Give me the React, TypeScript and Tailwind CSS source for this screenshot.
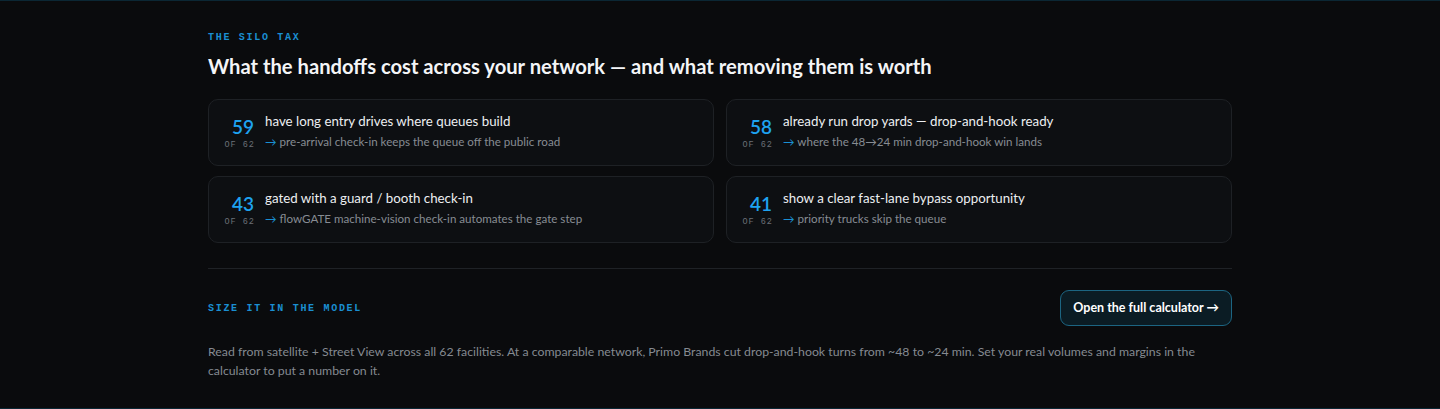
import React from 'react'

type Stat = {
  count: number
  title: string
  note: string
}

const stats: Stat[] = [
  { count: 59, title: 'have long entry drives where queues build', note: 'pre-arrival check-in keeps the queue off the public road' },
  { count: 58, title: 'already run drop yards — drop-and-hook ready', note: 'where the 48→24 min drop-and-hook win lands' },
  { count: 43, title: 'gated with a guard / booth check-in', note: 'flowGATE machine-vision check-in automates the gate step' },
  { count: 41, title: 'show a clear fast-lane bypass opportunity', note: 'priority trucks skip the queue' },
]

const TOTAL = 62

function Eyebrow({ children }: { children: React.ReactNode }) {
  return (
    <p className="font-['Liberation_Mono',monospace] text-[10px] font-bold leading-[15px] tracking-[0.17em] text-[#1a8fd2] uppercase">
      {children}
    </p>
  )
}

function StatCard({ stat }: { stat: Stat }) {
  return (
    <div className="flex items-center gap-[11px] rounded-[10px] border border-[#1e2125] bg-[#0d0f12] px-[14px] h-[67px]">
      <div className="flex w-[31px] flex-col items-end">
        <span className="text-[19px] font-semibold leading-[24px] text-[#1ea2f0]">{stat.count}</span>
        <span className="font-['Liberation_Mono',monospace] text-[8.5px] leading-[12px] tracking-[0.12em] text-[#6b7077] -mr-[1px]">
          OF {TOTAL}
        </span>
      </div>
      <div className="flex flex-col gap-[2px] pb-[3px]">
        <span className="text-[13.3px] leading-[19px] text-[#eceef1]">{stat.title}</span>
        <span className="text-[11.6px] leading-[17px] text-[#878c93]">
          <span className="text-[#1a8fd2]">→</span> {stat.note}
        </span>
      </div>
    </div>
  )
}

export default function App() {
  return (
    <section className="min-h-[409px] border-y border-[#0b2734] bg-[#0a0b0d] font-['Lato',sans-serif]">
      <div className="mx-auto w-[1024px] pt-[29px] pb-7">
        <Eyebrow>The silo tax</Eyebrow>
        <h2 className="mt-[7px] text-[20.2px] font-bold leading-[28px] text-[#f4f5f7]">
          What the handoffs cost across your network — and what removing them is worth
        </h2>

        <div className="mt-[19px] grid grid-cols-2 gap-x-3 gap-y-[10px]">
          {stats.map((s) => (
            <StatCard key={s.count} stat={s} />
          ))}
        </div>

        <div className="mt-[25px] border-t border-[#1f2226]" />

        <div className="mt-[21px] flex items-center justify-between">
          <Eyebrow>Size it in the model</Eyebrow>
          <button className="h-[36px] rounded-[9px] border border-[#1c6582] bg-[#0b1c24] px-3 text-[12.5px] font-bold text-white">
            Open the full calculator →
          </button>
        </div>

        <p className="mt-4 text-[12.3px] leading-[19px] text-[#858a91]">
          Read from satellite + Street View across all 62 facilities. At a comparable network, Primo Brands cut
          drop-and-hook turns from ~48 to ~24 min. Set your real volumes and margins in the calculator to put a
          number on it.
        </p>
      </div>
    </section>
  )
}
